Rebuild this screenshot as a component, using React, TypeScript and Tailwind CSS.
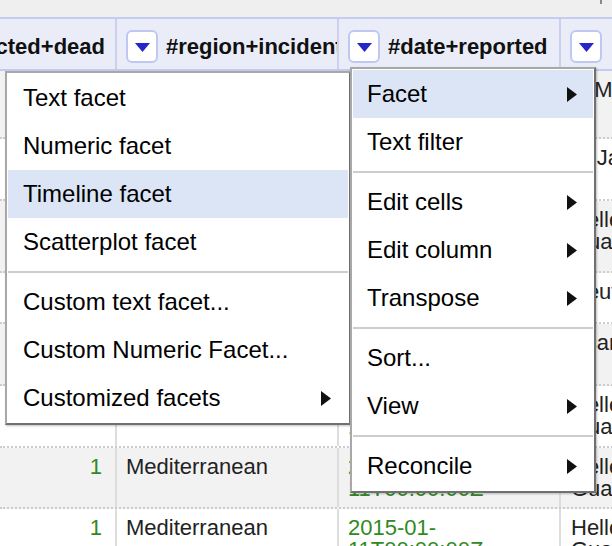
import React from "react";

type Row = { h: string; gray: boolean; num: string; region: string; source: string };

const rows: Row[] = [
    { h: "h-[68px]", gray: true, num: "2", region: "Mediterranean", source: "IOM Missing" },
    { h: "h-[62px]", gray: false, num: "1", region: "Mediterranean", source: "Al Jazeera" },
    { h: "h-[72px]", gray: true, num: "3", region: "Mediterranean", source: "Hellenic Coast Guard" },
    { h: "h-[51px]", gray: false, num: "1", region: "Mediterranean", source: "Reuters" },
    { h: "h-[62px]", gray: true, num: "4", region: "Mediterranean", source: "Scandinavian" },
    { h: "h-[62px]", gray: false, num: "1", region: "Mediterranean", source: "Hellenic Coast Guard" },
    { h: "h-[61px]", gray: true, num: "1", region: "Mediterranean", source: "Hellenic Coast Guard" },
    { h: "h-[66px]", gray: false, num: "1", region: "Mediterranean", source: "Hellenic Coast Guard" },
];

function Caret() {
    return (
        <div className="flex h-[33px] w-[32px] shrink-0 items-center justify-center rounded-[6px] border-2 border-[#bfc8f2] bg-white">
            <svg width="15" height="9" viewBox="0 0 15 9" className="mt-[2px]">
                <polygon points="0,0 15,0 7.5,9" fill="#2626c8" />
            </svg>
        </div>
    );
}

function Arrow() {
    return (
        <svg width="10" height="15" viewBox="0 0 10 15">
            <polygon points="0,0 10,7.5 0,15" fill="#111" />
        </svg>
    );
}

function Item({ label, sub, pl }: { label: string; sub?: boolean; pl: string }) {
    return (
        <div className={`flex h-12 items-center justify-between ${pl}`}>
            <span>{label}</span>
            {sub && <Arrow />}
        </div>
    );
}

function Sep() {
    return (
        <div className="py-[5px]">
            <div className="h-[2px] bg-[#cdcdcd]" />
        </div>
    );
}

export default function App() {
    return (
        <div className="relative h-[546px] w-[612px] overflow-hidden bg-white font-['Liberation_Sans',Arial,Helvetica,sans-serif] text-[#222]">
            <div className="flex h-[17px] justify-end bg-[#efefef] pr-[10px]">
                <div className="h-[4px] w-[2px] bg-[#888]" />
            </div>

            {/* column headers */}
            <div className="flex h-[54px] w-[780px] border-y-2 border-[#c4ccf2] bg-[#eaedf8] text-[22px] font-bold text-[#111] whitespace-nowrap">
                <div className="flex w-[117px] shrink-0 items-center justify-end overflow-hidden border-r-2 border-[#cad0ee] pr-[10px] pt-[4px]">
                    #affected+dead
                </div>
                <div className="flex w-[222px] shrink-0 items-center gap-[8px] overflow-hidden border-r-2 border-[#cad0ee] pl-[9px] pt-[4px]">
                    <Caret />
                    <span>#region+incident</span>
                </div>
                <div className="flex w-[222px] shrink-0 items-center gap-[8px] overflow-hidden border-r-2 border-[#cad0ee] pl-[9px] pt-[4px]">
                    <Caret />
                    <span>#date+reported</span>
                </div>
                <div className="flex w-[200px] shrink-0 items-center gap-[10px] overflow-hidden pl-[9px] pt-[4px]">
                    <Caret />
                    <span>#meta+source</span>
                </div>
            </div>

            {/* rows */}
            <div className="w-[780px] text-[22px] leading-[22px]">
                {rows.map((r, i) => (
                    <div
                        key={i}
                        className={`flex ${r.h} border-b-2 border-dotted border-[#cccccc] ${r.gray ? "bg-[#f2f2f2]" : "bg-white"}`}
                    >
                        <div className="w-[117px] shrink-0 border-r-2 border-[#dddddd] pr-[13px] pt-[8px] text-right text-[#2f8a22]">
                            {r.num}
                        </div>
                        <div className="w-[222px] shrink-0 border-r-2 border-[#dddddd] pl-[9px] pt-[8px]">
                            {r.region}
                        </div>
                        <div className="w-[222px] shrink-0 border-r-2 border-[#dddddd] pl-[9px] pt-[8px] text-[#2f8a22]">
                            2015-01-
                            <br />
                            11T00:00:00Z
                        </div>
                        <div className="w-[190px] shrink-0 pl-[10px] pr-[12px] pt-[8px]">{r.source}</div>
                    </div>
                ))}
            </div>

            {/* facet submenu */}
            <div className="absolute left-[5px] top-[71px] w-[346px] border-2 border-[#a8a8a8] border-b-[#707070] border-r-[#707070] bg-white p-[1px] text-[24px] text-black shadow-[1px_1px_2px_rgba(0,0,0,0.25)]">
                <div className="pr-[17px]">
                    <Item pl="pl-[15px]" label="Text facet" />
                    <Item pl="pl-[15px]" label="Numeric facet" />
                </div>
                <div className="bg-[#dbe5f6] pr-[17px]">
                    <Item pl="pl-[15px]" label="Timeline facet" />
                </div>
                <div className="pr-[17px]">
                    <Item pl="pl-[15px]" label="Scatterplot facet" />
                </div>
                <Sep />
                <div className="pr-[17px]">
                    <Item pl="pl-[15px]" label="Custom text facet..." />
                    <Item pl="pl-[15px]" label="Custom Numeric Facet..." />
                    <Item pl="pl-[15px]" label="Customized facets" sub />
                </div>
            </div>

            {/* column menu */}
            <div className="absolute left-[350px] top-[67px] w-[246px] border-2 border-[#a8a8a8] border-b-[#707070] border-r-[#707070] bg-white p-[1px] text-[24px] text-black shadow-[1px_1px_2px_rgba(0,0,0,0.25)]">
                <div className="bg-[#dbe5f6] pr-[16px]">
                    <Item pl="pl-[14px]" label="Facet" sub />
                </div>
                <div className="pr-[16px]">
                    <Item pl="pl-[14px]" label="Text filter" />
                </div>
                <Sep />
                <div className="pr-[16px]">
                    <Item pl="pl-[14px]" label="Edit cells" sub />
                    <Item pl="pl-[14px]" label="Edit column" sub />
                    <Item pl="pl-[14px]" label="Transpose" sub />
                </div>
                <Sep />
                <div className="pr-[16px]">
                    <Item pl="pl-[14px]" label="Sort..." />
                    <Item pl="pl-[14px]" label="View" sub />
                </div>
                <Sep />
                <div className="pr-[16px]">
                    <Item pl="pl-[14px]" label="Reconcile" sub />
                </div>
            </div>
        </div>
    );
}
